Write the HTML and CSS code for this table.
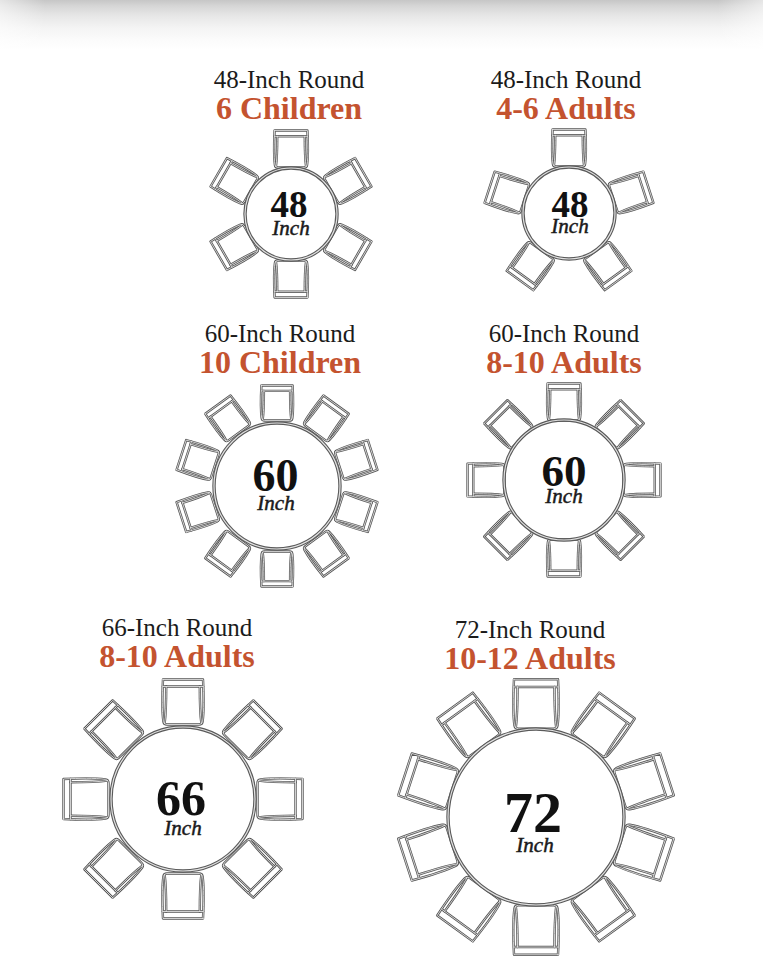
FILE: index.html
```html
<!DOCTYPE html>
<html lang="en">
<head>
<meta charset="utf-8">
<title>Round Table Seating</title>
<link rel="stylesheet" href="styles.css">
</head>
<body>
<svg class="defs" aria-hidden="true">
  <defs>
    <g id="chair">
      <g class="ln dk">
        <path d="M-20,-22.5 H20 C20.8,-6 21.2,8 19.6,19.5 Q19.2,22.5 16,22.5 H-16 Q-19.2,22.5 -19.6,19.5 C-21.2,8 -20.8,-6 -20,-22.5 Z"/>
        <path d="M-20,-15.5 H20"/>
        <path d="M-16.8,-15.5 C-16.8,3 -17.2,13 -18.4,21.5 M16.8,-15.5 C16.8,3 17.2,13 18.4,21.5"/>
      </g>
      <g class="ln lt">
        <path d="M-20,-22.5 H20 C20.8,-6 21.2,8 19.6,19.5 Q19.2,22.5 16,22.5 H-16 Q-19.2,22.5 -19.6,19.5 C-21.2,8 -20.8,-6 -20,-22.5 Z"/>
        <path d="M-20,-15.5 H20"/>
        <path d="M-16.8,-15.5 C-16.8,3 -17.2,13 -18.4,21.5 M16.8,-15.5 C16.8,3 17.2,13 18.4,21.5"/>
      </g>
    </g>
  </defs>
</svg>

<div class="shade"></div>

<div class="row r1">
  <div class="card c1">
    <div class="title">48-Inch Round</div>
    <div class="sub">6 Children</div>
    <svg class="plan" width="170" height="170" viewBox="-85 -85 170 170">
      <use href="#chair" transform="rotate(0) translate(0 -65) scale(.82)"/>
      <use href="#chair" transform="rotate(60) translate(0 -65) scale(.82)"/>
      <use href="#chair" transform="rotate(120) translate(0 -65) scale(.82)"/>
      <use href="#chair" transform="rotate(180) translate(0 -65) scale(.82)"/>
      <use href="#chair" transform="rotate(240) translate(0 -65) scale(.82)"/>
      <use href="#chair" transform="rotate(300) translate(0 -65) scale(.82)"/>
      <circle class="tbl dk" r="46"/>
      <circle class="tbl lt" r="46"/>
      <text class="lbl"><tspan class="num n37" x="-2" y="3">48</tspan><tspan class="inch" x="0" y="21">Inch</tspan></text>
    </svg>
  </div>
  <div class="card c2">
    <div class="title">48-Inch Round</div>
    <div class="sub">4-6 Adults</div>
    <svg class="plan" width="170" height="170" viewBox="-85 -85 170 170">
      <use href="#chair" transform="rotate(0) translate(0 -65) scale(.82)"/>
      <use href="#chair" transform="rotate(72) translate(0 -65) scale(.82)"/>
      <use href="#chair" transform="rotate(144) translate(0 -65) scale(.82)"/>
      <use href="#chair" transform="rotate(216) translate(0 -65) scale(.82)"/>
      <use href="#chair" transform="rotate(288) translate(0 -65) scale(.82)"/>
      <circle class="tbl dk" r="46"/>
      <circle class="tbl lt" r="46"/>
      <text class="lbl"><tspan class="num n37" x="1" y="4">48</tspan><tspan class="inch" x="1" y="20">Inch</tspan></text>
    </svg>
  </div>
</div>

<div class="row r2">
  <div class="card c3">
    <div class="title">60-Inch Round</div>
    <div class="sub">10 Children</div>
    <svg class="plan" width="210" height="210" viewBox="-105 -105 210 210">
      <use href="#chair" transform="rotate(0) translate(0 -83) scale(.78)"/>
      <use href="#chair" transform="rotate(36) translate(0 -83) scale(.78)"/>
      <use href="#chair" transform="rotate(72) translate(0 -83) scale(.78)"/>
      <use href="#chair" transform="rotate(108) translate(0 -83) scale(.78)"/>
      <use href="#chair" transform="rotate(144) translate(0 -83) scale(.78)"/>
      <use href="#chair" transform="rotate(180) translate(0 -83) scale(.78)"/>
      <use href="#chair" transform="rotate(216) translate(0 -83) scale(.78)"/>
      <use href="#chair" transform="rotate(252) translate(0 -83) scale(.78)"/>
      <use href="#chair" transform="rotate(288) translate(0 -83) scale(.78)"/>
      <use href="#chair" transform="rotate(324) translate(0 -83) scale(.78)"/>
      <circle class="tbl dk" r="63"/>
      <circle class="tbl lt" r="63"/>
      <text class="lbl"><tspan class="num n46" x="-1.5" y="5">60</tspan><tspan class="inch" x="-1" y="24">Inch</tspan></text>
    </svg>
  </div>
  <div class="card c4">
    <div class="title">60-Inch Round</div>
    <div class="sub">8-10 Adults</div>
    <svg class="plan" width="200" height="200" viewBox="-100 -100 200 200">
      <use href="#chair" transform="rotate(0) translate(0 -78) scale(.82)"/>
      <use href="#chair" transform="rotate(45) translate(0 -78) scale(.82)"/>
      <use href="#chair" transform="rotate(90) translate(0 -78) scale(.82)"/>
      <use href="#chair" transform="rotate(135) translate(0 -78) scale(.82)"/>
      <use href="#chair" transform="rotate(180) translate(0 -78) scale(.82)"/>
      <use href="#chair" transform="rotate(225) translate(0 -78) scale(.82)"/>
      <use href="#chair" transform="rotate(270) translate(0 -78) scale(.82)"/>
      <use href="#chair" transform="rotate(315) translate(0 -78) scale(.82)"/>
      <circle class="tbl dk" r="60"/>
      <circle class="tbl lt" r="60"/>
      <text class="lbl"><tspan class="num n45" x="0" y="6">60</tspan><tspan class="inch" x="0" y="23">Inch</tspan></text>
    </svg>
  </div>
</div>

<div class="row r3">
  <div class="card c5">
    <div class="title">66-Inch Round</div>
    <div class="sub">8-10 Adults</div>
    <svg class="plan" width="250" height="250" viewBox="-125 -125 250 250">
      <use href="#chair" transform="rotate(0) translate(0 -97)"/>
      <use href="#chair" transform="rotate(45) translate(0 -97)"/>
      <use href="#chair" transform="rotate(90) translate(0 -97)"/>
      <use href="#chair" transform="rotate(135) translate(0 -97)"/>
      <use href="#chair" transform="rotate(180) translate(0 -97)"/>
      <use href="#chair" transform="rotate(225) translate(0 -97)"/>
      <use href="#chair" transform="rotate(270) translate(0 -97)"/>
      <use href="#chair" transform="rotate(315) translate(0 -97)"/>
      <circle class="tbl dk" r="72"/>
      <circle class="tbl lt" r="72"/>
      <text class="lbl"><tspan class="num n50" x="-2" y="16">66</tspan><tspan class="inch" x="0" y="36">Inch</tspan></text>
    </svg>
  </div>
  <div class="card c6">
    <div class="title">72-Inch Round</div>
    <div class="sub">10-12 Adults</div>
    <svg class="plan" width="284" height="284" viewBox="-142 -142 284 284">
      <use href="#chair" transform="rotate(0) translate(0 -113) scale(1.1)"/>
      <use href="#chair" transform="rotate(36) translate(0 -113) scale(1.1)"/>
      <use href="#chair" transform="rotate(72) translate(0 -113) scale(1.1)"/>
      <use href="#chair" transform="rotate(108) translate(0 -113) scale(1.1)"/>
      <use href="#chair" transform="rotate(144) translate(0 -113) scale(1.1)"/>
      <use href="#chair" transform="rotate(180) translate(0 -113) scale(1.1)"/>
      <use href="#chair" transform="rotate(216) translate(0 -113) scale(1.1)"/>
      <use href="#chair" transform="rotate(252) translate(0 -113) scale(1.1)"/>
      <use href="#chair" transform="rotate(288) translate(0 -113) scale(1.1)"/>
      <use href="#chair" transform="rotate(324) translate(0 -113) scale(1.1)"/>
      <circle class="tbl dk" r="88"/>
      <circle class="tbl lt" r="88"/>
      <text class="lbl"><tspan class="num n58" x="-3" y="15">72</tspan><tspan class="inch" x="-1" y="35">Inch</tspan></text>
    </svg>
  </div>
</div>
</body>
</html>
```

FILE: styles.css
```css
html, body {
  margin: 0;
  padding: 0;
  background: #ffffff;
}

body {
  width: 763px;
  height: 960px;
  overflow: hidden;
  font-family: "Liberation Serif", "Times New Roman", serif;
}

.defs {
  display: block;
  width: 0;
  height: 0;
  overflow: hidden;
}

.shade {
  height: 50px;
  background:
    linear-gradient(to right, rgba(255,255,255,0.55) 0, rgba(255,255,255,0) 45px, rgba(255,255,255,0) calc(100% - 45px), rgba(255,255,255,0.55) 100%),
    linear-gradient(to bottom, #c6c6c6 0, #d6d6d6 6px, #e7e7e7 16px, #f4f4f4 28px, #fbfbfb 40px, #ffffff 50px);
}

.row {
  display: flex;
  align-items: flex-start;
}

.r1 {
  margin-top: 17px;
  padding-left: 169px;
  gap: 37px;
}

.r2 {
  margin-top: 22px;
  padding-left: 160px;
  gap: 44px;
}

.r3 {
  margin-top: 24px;
  padding-left: 27px;
  gap: 53px;
}

.card {
  display: flex;
  flex-direction: column;
  align-items: center;
  width: 240px;
}

.r3 .card {
  width: 300px;
}

.title {
  font-size: 25px;
  line-height: 25px;
  color: #1b1b1b;
  white-space: nowrap;
}

.sub {
  font-size: 32px;
  line-height: 32px;
  font-weight: bold;
  color: #c4532f;
  white-space: nowrap;
}

.plan {
  display: block;
  overflow: visible;
}

.c1 .plan { margin-top: 5px; margin-left: 4px; }
.c2 .plan { margin-top: 4px; margin-left: 6px; }
.c3 .plan { margin-top: 3px; margin-right: 6px; }
.c4 .plan { margin-top: 2px; }
.c5 .plan { margin-top: 2px; margin-left: 12px; }
.c6 { margin-top: 2px; }
.c6 .plan { margin-top: 1px; margin-left: 12px; }

.ln {
  fill: none;
  stroke-linejoin: round;
  stroke-linecap: round;
}

.ln path {
  vector-effect: non-scaling-stroke;
}

.ln.dk {
  stroke: #555555;
  stroke-width: 2.4px;
}

.ln.lt {
  stroke: #f0f0f0;
  stroke-width: 0.8px;
}

.tbl {
  fill: none;
}

.tbl.dk {
  stroke: #5a5a5a;
  stroke-width: 3.4px;
}

.tbl.lt {
  stroke: #e2e2e2;
  stroke-width: 1.2px;
}

.lbl {
  font-family: "Liberation Serif", "Times New Roman", serif;
  text-anchor: middle;
}

.num {
  font-weight: bold;
  fill: #111111;
}

.n37 { font-size: 37px; }
.n45 { font-size: 45px; }
.n46 { font-size: 46px; }
.n50 { font-size: 50px; }
.n58 { font-size: 58px; }

.inch {
  font-style: italic;
  font-size: 21px;
  fill: #1a1a1a;
  stroke: #1a1a1a;
  stroke-width: 0.5px;
}
```
